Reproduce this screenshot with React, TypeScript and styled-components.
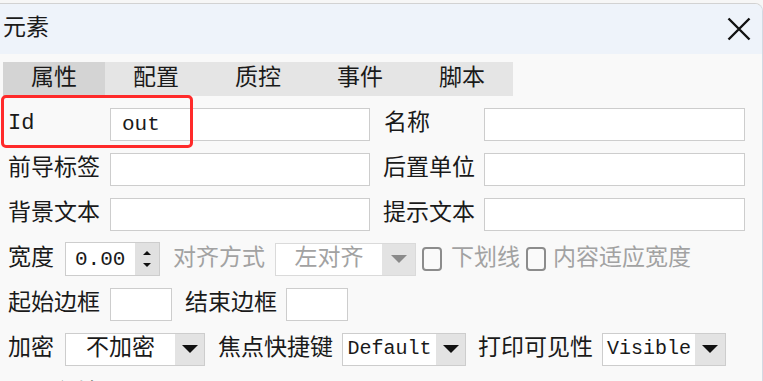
import React from "react";
import styled, { createGlobalStyle } from "styled-components";

const GlobalStyle = createGlobalStyle`
  html, body {
    margin: 0;
    padding: 0;
    background: #f6f6f6;
  }
  body {
    font-family: "Liberation Mono", "Noto Sans CJK SC", monospace;
    color: #1a1a1a;
  }
`;

const Window = styled.div`
  position: relative;
  width: 762px;
  height: 377px;
  margin-top: 3px;
  border-top: 1px solid #d2d2d2;
  border-right: 1px solid #d3d9e3;
  border-top-right-radius: 8px;
  background: #f9f9f9;
  overflow: hidden;
  display: flex;
  flex-direction: column;
  & > * {
    flex-shrink: 0;
  }
`;

const TitleBar = styled.div`
  height: 50px;
  background: #eef3fa;
  display: flex;
  align-items: center;
  justify-content: space-between;
  padding: 0 11px 0 3px;
`;

const Title = styled.span`
  font-size: 23px;
  line-height: 1;
`;

const CloseBtn = styled.button`
  border: 0;
  background: transparent;
  padding: 0;
  width: 24px;
  height: 24px;
  display: flex;
  cursor: pointer;
`;

const TabBar = styled.div`
  display: flex;
  margin: 8px 0 0 3px;
  height: 34px;
`;

const Tab = styled.div<{ $active?: boolean }>`
  width: 102px;
  background: ${(p) => (p.$active ? "#d4d4d4" : "#e5e5e5")};
  display: flex;
  align-items: center;
  justify-content: center;
  font-size: 23px;
  line-height: 1;
`;

const Form = styled.div`
  display: flex;
  flex-direction: column;
  gap: 11px;
  padding: 11px 0 0 8px;
`;

const Row = styled.div`
  display: flex;
  align-items: center;
  height: 34px;
  flex-shrink: 0;
`;

const Label = styled.span<{ $w?: number; $ml?: number; $muted?: boolean }>`
  width: ${(p) => (p.$w ? `${p.$w}px` : "auto")};
  margin-left: ${(p) => p.$ml ?? 0}px;
  flex-shrink: 0;
  font-size: 23px;
  line-height: 1;
  white-space: nowrap;
  color: ${(p) => (p.$muted ? "#a2a2a2" : "#1a1a1a")};
`;

const LatinLabel = styled(Label)`
  font-size: 22px;
`;

const TextBox = styled.div<{ $w: number }>`
  width: ${(p) => p.$w}px;
  height: 33px;
  box-sizing: border-box;
  flex-shrink: 0;
  border: 1px solid #cdcdcd;
  background: #fff;
  display: flex;
  align-items: center;
  padding-left: 11px;
  font-size: 21px;
`;

const Spin = styled.div`
  width: 95px;
  height: 34px;
  box-sizing: border-box;
  border: 1px solid #cdcdcd;
  background: #fff;
  display: flex;
  flex-shrink: 0;
`;

const SpinValue = styled.span`
  flex: 1;
  display: flex;
  align-items: center;
  padding-left: 9px;
  font-size: 21px;
`;

const SpinButtons = styled.div`
  width: 24px;
  background: #e1e1e1;
  display: flex;
  flex-direction: column;
  align-items: center;
  justify-content: center;
  gap: 8px;
`;

const Tri = styled.span<{ $up?: boolean; $size?: number; $color?: string }>`
  width: 0;
  height: 0;
  border-left: ${(p) => p.$size ?? 4}px solid transparent;
  border-right: ${(p) => p.$size ?? 4}px solid transparent;
  ${(p) =>
    p.$up
      ? `border-bottom: ${(p.$size ?? 4)}px solid ${p.$color ?? "#111"};`
      : `border-top: ${(p.$size ?? 4)}px solid ${p.$color ?? "#111"};`}
`;

const Select = styled.div<{ $w: number; $disabled?: boolean }>`
  width: ${(p) => p.$w}px;
  height: 33px;
  box-sizing: border-box;
  flex-shrink: 0;
  border: 1px solid ${(p) => (p.$disabled ? "#dadada" : "#cdcdcd")};
  background: #fff;
  display: flex;
  color: ${(p) => (p.$disabled ? "#a2a2a2" : "#1a1a1a")};
`;

const SelectText = styled.span<{ $latin?: boolean }>`
  flex: 1;
  display: flex;
  align-items: center;
  justify-content: center;
  font-size: ${(p) => (p.$latin ? 20 : 23)}px;
  line-height: 1;
`;

const SelectArrow = styled.span<{ $w: number }>`
  width: ${(p) => p.$w}px;
  background: #e3e3e3;
  display: flex;
  align-items: center;
  justify-content: center;
`;

const Check = styled.span<{ $ml: number }>`
  width: 20px;
  height: 24px;
  margin-left: ${(p) => p.$ml}px;
  box-sizing: border-box;
  border: 2px solid #8c8c8c;
  border-radius: 4px;
  background: #fafafa;
  flex-shrink: 0;
`;

const Highlight = styled.div`
  position: absolute;
  left: 1px;
  top: 91px;
  width: 192px;
  height: 53px;
  box-sizing: border-box;
  border: 3px solid #ff2a2a;
  border-radius: 5px;
  pointer-events: none;
`;

const tabs = ["属性", "配置", "质控", "事件", "脚本"];

export default function App() {
  return (
    <>
      <GlobalStyle />
      <Window>
        <TitleBar>
          <Title>元素</Title>
          <CloseBtn aria-label="close">
            <svg width="24" height="24" viewBox="0 0 24 24">
              <path d="M1.5 1.5 L22.5 22.5 M22.5 1.5 L1.5 22.5" stroke="#111" strokeWidth="2.4" />
            </svg>
          </CloseBtn>
        </TitleBar>
        <TabBar>
          {tabs.map((t, i) => (
            <Tab key={t} $active={i === 0}>
              {t}
            </Tab>
          ))}
        </TabBar>
        <Form>
          <Row>
            <LatinLabel $w={102}>Id</LatinLabel>
            <TextBox $w={260}>out</TextBox>
            <Label $ml={14} $w={100}>名称</Label>
            <TextBox $w={261} />
          </Row>
          <Row>
            <Label $w={102}>前导标签</Label>
            <TextBox $w={260} />
            <Label $ml={13} $w={101}>后置单位</Label>
            <TextBox $w={261} />
          </Row>
          <Row>
            <Label $w={102}>背景文本</Label>
            <TextBox $w={260} />
            <Label $ml={13} $w={101}>提示文本</Label>
            <TextBox $w={261} />
          </Row>
          <Row>
            <Label $w={57}>宽度</Label>
            <Spin>
              <SpinValue>0.00</SpinValue>
              <SpinButtons>
                <Tri $up $size={4} />
                <Tri $size={4} />
              </SpinButtons>
            </Spin>
            <Label $ml={13} $w={102} $muted>
              对齐方式
            </Label>
            <Select $w={141} $disabled>
              <SelectText>左对齐</SelectText>
              <SelectArrow $w={33}>
                <Tri $size={8} $color="#8a8a8a" />
              </SelectArrow>
            </Select>
            <Check $ml={6} />
            <Label $ml={9} $muted>
              下划线
            </Label>
            <Check $ml={6} />
            <Label $ml={7} $muted>
              内容适应宽度
            </Label>
          </Row>
          <Row>
            <Label $w={102}>起始边框</Label>
            <TextBox $w={62} />
            <Label $ml={13} $w={101}>结束边框</Label>
            <TextBox $w={62} />
          </Row>
          <Row>
            <Label $w={57}>加密</Label>
            <Select $w={140}>
              <SelectText>不加密</SelectText>
              <SelectArrow $w={29}>
                <Tri $size={8} />
              </SelectArrow>
            </Select>
            <Label $ml={13} $w={124}>焦点快捷键</Label>
            <Select $w={124}>
              <SelectText $latin>Default</SelectText>
              <SelectArrow $w={29}>
                <Tri $size={8} />
              </SelectArrow>
            </Select>
            <Label $ml={12} $w={124}>打印可见性</Label>
            <Select $w={124}>
              <SelectText $latin>Visible</SelectText>
              <SelectArrow $w={30}>
                <Tri $size={8} />
              </SelectArrow>
            </Select>
          </Row>
          <Row>
            <Label $w={102}>是否必填</Label>
          </Row>
        </Form>
        <Highlight />
      </Window>
    </>
  );
}
